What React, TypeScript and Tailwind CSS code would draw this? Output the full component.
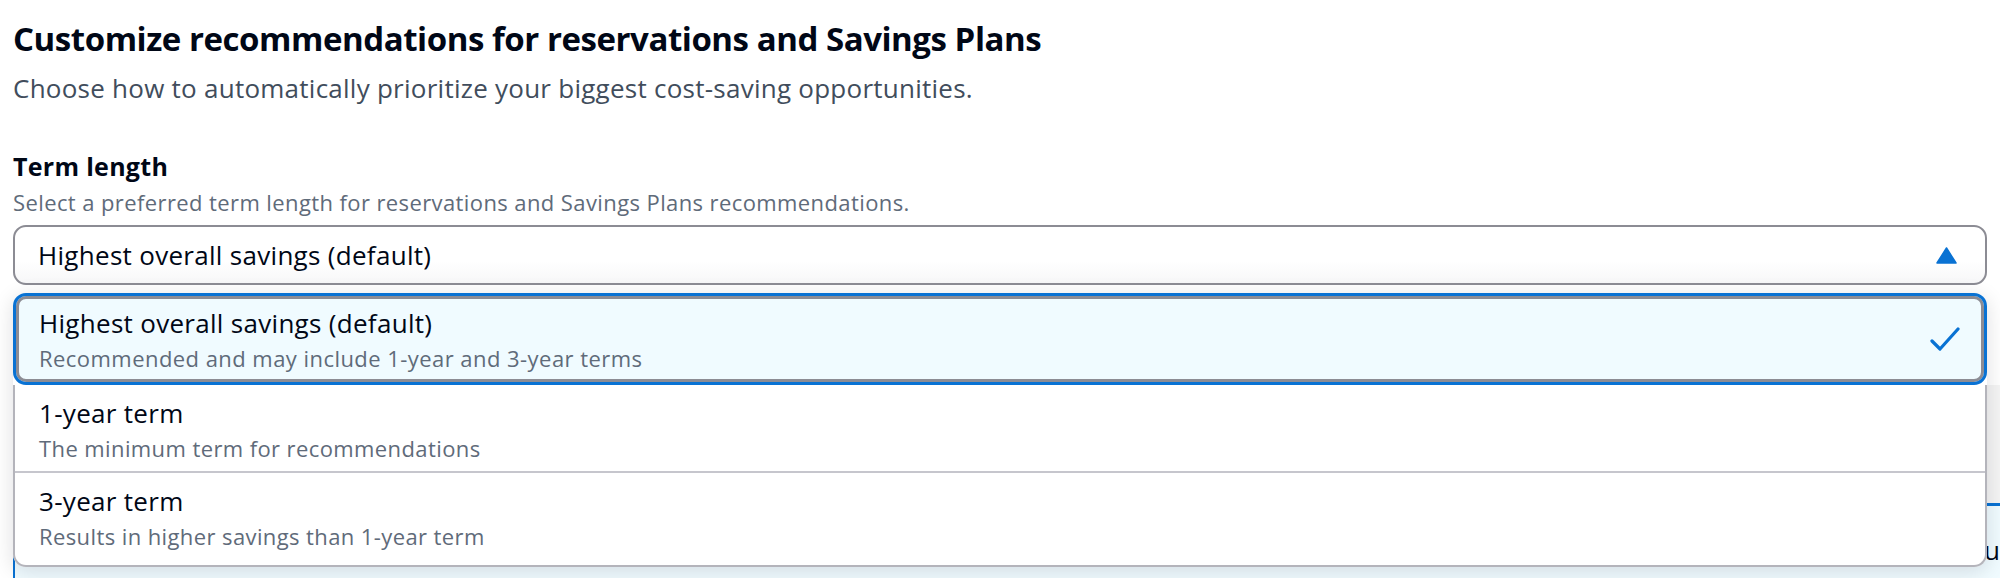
import React from "react";

const options = [
  {
    label: "Highest overall savings (default)",
    description: "Recommended and may include 1-year and 3-year terms",
  },
  { label: "1-year term", description: "The minimum term for recommendations" },
  { label: "3-year term", description: "Results in higher savings than 1-year term" },
];

function Check() {
  return (
    <svg width="30" height="26" viewBox="0 0 30 26" fill="none">
      <path d="M2 15 L10 23 L28 3" stroke="#0972d3" strokeWidth="3.2" strokeLinecap="round" strokeLinejoin="round" />
    </svg>
  );
}

function Caret() {
  return (
    <svg width="21" height="17" viewBox="0 0 21 17">
      <path d="M10.5 1 L20 16 L1 16 Z" fill="#0972d3" stroke="#0972d3" strokeWidth="1.5" strokeLinejoin="round" />
    </svg>
  );
}

export default function App() {
  return (
    <div className="relative w-[2000px] h-[578px] overflow-hidden bg-white font-['Open_Sans',sans-serif] text-[#000716]">
      <div className="px-[13px] pt-[19px]">
        {/* Header */}
        <h1 className="text-[33px] leading-[40px] font-bold tracking-[-0.45px]">
          Customize recommendations for reservations and Savings Plans
        </h1>
        <p className="mt-[13px] text-[26px] leading-[32px] tracking-[0.25px] text-[#414d5c]">
          Choose how to automatically prioritize your biggest cost-saving opportunities.
        </p>

        {/* Field */}
        <div className="mt-[46px] text-[25px] leading-[32px] tracking-[0.3px] font-bold">Term length</div>
        <div className="mt-[6px] text-[22px] leading-[28px] tracking-[0.4px] text-[#5f6b7a]">
          Select a preferred term length for reservations and Savings Plans recommendations.
        </div>

        <div className="relative mt-[9px]">
          <div className="flex items-center justify-between h-[60px] pl-[23px] pr-[28px] border-2 border-[#8c8c94] rounded-[13px] bg-gradient-to-b from-white from-60% to-[#f7f7f8]">
            <span className="text-[26px] leading-[32px] tracking-[0.3px]">Highest overall savings (default)</span>
            <Caret />
          </div>

          {/* Dropdown */}
          <div className="absolute left-0 right-0 top-[68px] z-10 rounded-[13px] bg-white shadow-[0_4px_20px_1px_rgba(0,7,22,0.12)]">
            <div className="flex items-center justify-between h-[92px] pl-[23px] pr-[24px] rounded-[13px] border-[3px] border-[#0972d3] bg-[#f0fbff] shadow-[inset_0_0_0_3px_#8c8c94]">
              <div>
                <div className="text-[26px] leading-[32px] tracking-[0.3px]">{options[0].label}</div>
                <div className="mt-[5px] text-[22px] leading-[28px] tracking-[0.45px] text-[#5f6b7a]">{options[0].description}</div>
              </div>
              <Check />
            </div>
            <div className="border-2 border-t-0 border-[#b4b4bb] rounded-b-[13px]">
              {options.slice(1).map((o, i) => (
                <div
                  key={o.label}
                  className={`px-[24px] pt-[12px] ${i === 0 ? "h-[88px] border-b-2 border-[#c6c6cd]" : "h-[92px]"}`}
                >
                  <div className="text-[26px] leading-[32px] tracking-[0.3px]">{o.label}</div>
                  <div className="mt-[5px] text-[22px] leading-[28px] tracking-[0.4px] text-[#5f6b7a]">{o.description}</div>
                </div>
              ))}
            </div>
          </div>
        </div>

        {/* Content underneath the open dropdown */}
        <div className="mt-[100px] -mr-[13px] h-[118px] bg-[#f4f4f4]" />
        <div className="-mr-[13px] h-[80px] border-t-[3px] border-l-2 border-[#0972d3] bg-[#f0fbff] flex justify-end pt-[28px]">
          <span className="text-[26px] leading-[32px]">u</span>
        </div>
      </div>
    </div>
  );
}
